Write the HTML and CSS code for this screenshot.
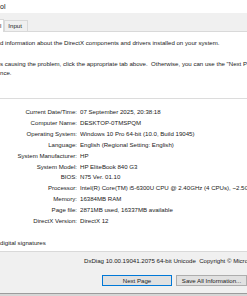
FILE: index.html
```html
<!DOCTYPE html>
<html lang="en">
<head>
<meta charset="utf-8">
<title>DirectX Diagnostic Tool</title>
<link rel="stylesheet" href="styles.css">
</head>
<body>
<div class="window">
  <div class="titlebar"><span class="title">ol</span></div>
  <div class="client">
    <div class="tabs">
      <div class="tab sel">l</div>
      <div class="tab">Input</div>
    </div>
    <div class="panel">
      <p class="line first">d information about the DirectX components and drivers installed on your system.</p>
      <p class="line second">s causing the problem, click the appropriate tab above.&nbsp; Otherwise, you can use the "Next Page" button below to visit each page in sequ</p>
      <p class="line">nce.</p>
      <div class="group">
        <div class="info">
          <span class="k">Current Date/Time:</span><span class="v">07 September 2025, 20:38:18</span>
          <span class="k">Computer Name:</span><span class="v">DESKTOP-0TMSPQM</span>
          <span class="k">Operating System:</span><span class="v">Windows 10 Pro 64-bit (10.0, Build 19045)</span>
          <span class="k">Language:</span><span class="v">English (Regional Setting: English)</span>
          <span class="k">System Manufacturer:</span><span class="v">HP</span>
          <span class="k">System Model:</span><span class="v">HP EliteBook 840 G3</span>
          <span class="k">BIOS:</span><span class="v">N75 Ver. 01.10</span>
          <span class="k">Processor:</span><span class="v">Intel(R) Core(TM) i5-6300U CPU @ 2.40GHz (4 CPUs), ~2.5GHz</span>
          <span class="k">Memory:</span><span class="v">16384MB RAM</span>
          <span class="k">Page file:</span><span class="v">2871MB used, 16337MB available</span>
          <span class="k">DirectX Version:</span><span class="v">DirectX 12</span>
        </div>
      </div>
      <p class="line check">digital signatures</p>
    </div>
    <p class="version">DxDiag 10.00.19041.2075 64-bit Unicode&nbsp; Copyright © Microsoft. All rights reserved.</p>
    <div class="buttons">
      <button class="btn default">Next Page</button>
      <button class="btn">Save All Information...</button>
    </div>
  </div>
</div>
</body>
</html>
```

FILE: styles.css
```css
* { box-sizing: border-box; margin: 0; padding: 0; }
html, body { width: 247px; height: 296px; overflow: hidden; }
html { background: #d6d6d6; }
body {
  font-family: "Liberation Sans", Arial, sans-serif;
  font-size: 6.1px;
  color: #1a1a1a;
  line-height: 9px;
}
.window {
  height: 294px;
  background: #f0f0f0;
  border-bottom: 1px solid #9c9c9c;
}
.titlebar {
  height: 13px;
  background: #ffffff;
  display: flex;
  align-items: center;
}
.title { font-size: 7px; color: #111; }
.client { padding-top: 7px; }
.tabs { display: flex; height: 11px; align-items: flex-end; }
.tab {
  height: 11px;
  border: 1px solid #d9d9d9;
  border-bottom: none;
  background: #f0f0f0;
  padding: 0 5px 0 3px;
  line-height: 10px;
  white-space: nowrap;
}
.tab.sel {
  height: 13px;
  background: #fff;
  border-left: none;
  padding: 0 2px 0 0;
  line-height: 12px;
  position: relative;
  z-index: 1;
  margin-bottom: -1px;
}
.panel {
  background: #fff;
  border-top: 1px solid #d9d9d9;
  border-bottom: 1px solid #d9d9d9;
  padding-top: 6px;
  height: 221px;
}
.line { white-space: nowrap; overflow: hidden; }
.second { margin-top: 12px; }
.group {
  margin-top: 21px;
  border-top: 1px solid #dcdcdc;
  padding: 8px 0 5px;
}
.info {
  display: grid;
  grid-template-columns: 77px 1fr;
  column-gap: 3px;
  line-height: 10.9px;
  white-space: nowrap;
}
.k { text-align: right; }
.v { overflow: hidden; }
.check { margin-top: 6px; }
.version {
  margin-top: 4px;
  padding-left: 84px;
  white-space: nowrap;
  overflow: hidden;
}
.buttons {
  display: flex;
  gap: 4px;
  padding-left: 102px;
  margin-top: 10px;
}
.btn {
  height: 11px;
  background: #e1e1e1;
  border: 1px solid #adadad;
  font-family: inherit;
  font-size: 6.1px;
  color: #1a1a1a;
  line-height: 9px;
  white-space: nowrap;
}
.btn.default { width: 70px; border-color: #0078d7; }
.btn:not(.default) { width: 71px; }
```
